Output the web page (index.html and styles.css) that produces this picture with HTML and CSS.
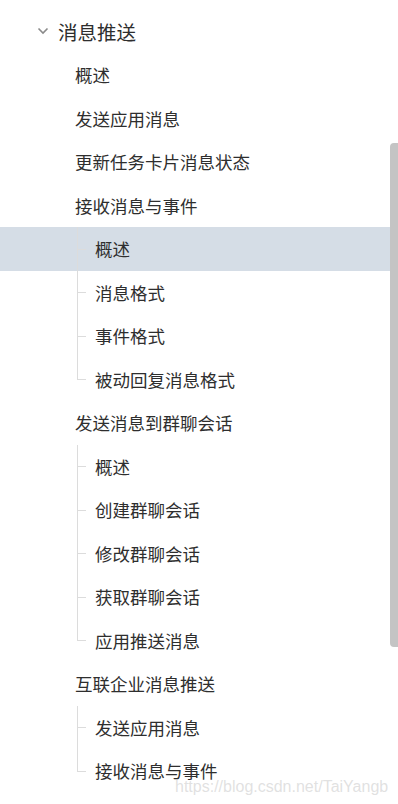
FILE: index.html
```html
<!DOCTYPE html>
<html lang="zh-CN">
<head>
  <meta charset="UTF-8">
  <meta name="viewport" content="width=device-width, initial-scale=1.0">
  <title>消息推送</title>
  <link rel="stylesheet" href="styles.css">
</head>
<body>

<!-- Doc sidebar tree -->
<nav class="tree">
  <div class="node-title">
    <svg class="chevron" width="12" height="8" viewBox="0 0 12 8">
      <path d="M1.5 1.5 L6 6 L10.5 1.5" fill="none" stroke="#8a8a8a" stroke-width="1.6"/>
    </svg>
    <span>消息推送</span>
  </div>

  <ul class="level2">
    <li class="item">概述</li>
    <li class="item">发送应用消息</li>
    <li class="item">更新任务卡片消息状态</li>
    <li class="item">接收消息与事件</li>
    <li>
      <ul class="level3">
        <li class="item active">概述</li>
        <li class="item">消息格式</li>
        <li class="item">事件格式</li>
        <li class="item">被动回复消息格式</li>
      </ul>
    </li>
    <li class="item">发送消息到群聊会话</li>
    <li>
      <ul class="level3">
        <li class="item">概述</li>
        <li class="item">创建群聊会话</li>
        <li class="item">修改群聊会话</li>
        <li class="item">获取群聊会话</li>
        <li class="item">应用推送消息</li>
      </ul>
    </li>
    <li class="item">互联企业消息推送</li>
    <li>
      <ul class="level3">
        <li class="item">发送应用消息</li>
        <li class="item">接收消息与事件</li>
      </ul>
    </li>
  </ul>
</nav>

<div class="scrollbar"></div>
<div class="watermark">https://blog.csdn.net/TaiYangb</div>

</body>
</html>
```

FILE: styles.css
```css
body {
  margin: 0;
  background: #fff;
  font-family: "Noto Sans CJK SC", "Noto Sans", sans-serif;
  color: #2e2e2e;
  overflow: hidden;
}

.tree {
  padding-top: 9px;
}

ul {
  list-style: none;
  margin: 0;
  padding: 0;
}

.node-title {
  height: 44px;
  display: flex;
  align-items: center;
  padding-left: 37px;
  font-size: 19.5px;
}

.chevron {
  margin-right: 9px;
}

.item {
  position: relative;
  height: 43.5px;
  line-height: 43.5px;
  font-size: 17.5px;
  padding-left: 75px;
  white-space: nowrap;
}

.level3 .item {
  padding-left: 95px;
}

.level3 .item::before {
  content: "";
  position: absolute;
  left: 77px;
  top: 0;
  bottom: 0;
  width: 1px;
  background: #dcdcdc;
}

.level3 .item:last-child::before {
  bottom: 50%;
}

.level3 .item::after {
  content: "";
  position: absolute;
  left: 77px;
  top: 50%;
  width: 9px;
  height: 1px;
  background: #dcdcdc;
}

.item.active {
  background: #d5dde6;
}

.scrollbar {
  position: absolute;
  left: 390px;
  top: 143px;
  width: 8px;
  height: 504px;
  background: #c4c4c4;
  border-radius: 4px 0 0 4px;
}

.watermark {
  position: absolute;
  left: 175px;
  top: 778px;
  font-family: "Liberation Sans", Arial, sans-serif;
  font-size: 16px;
  color: rgba(200, 200, 200, 0.55);
  white-space: nowrap;
}
```
